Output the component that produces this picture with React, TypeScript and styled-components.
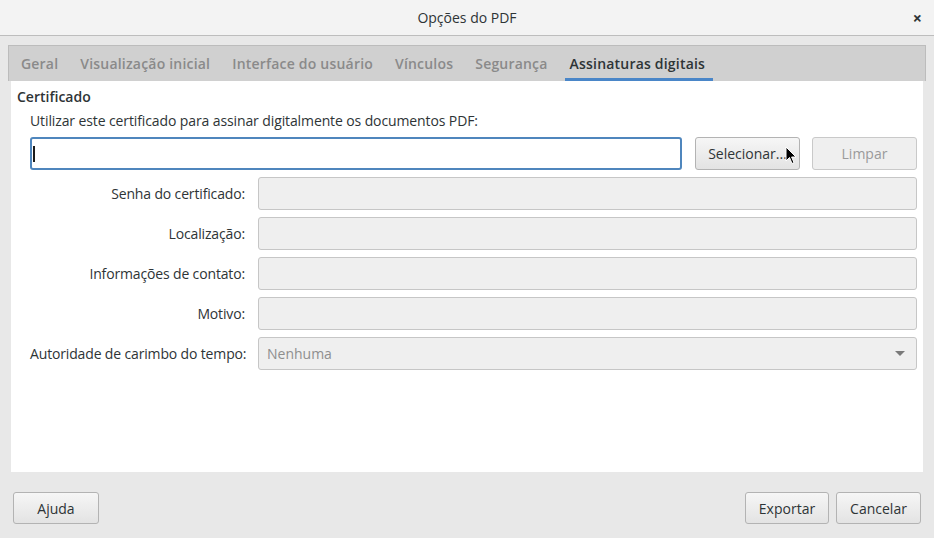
import React from "react";
import styled, { createGlobalStyle } from "styled-components";

const Global = createGlobalStyle`
  html, body { margin: 0; padding: 0; }
  body { background: #e8e8e8; font-family: "Open Sans", "Noto Sans", sans-serif; color: #2e3436; }
`;

const Window = styled.div`
  width: 934px;
  height: 538px;
  display: flex;
  flex-direction: column;
  background: #e8e8e8;
  overflow: hidden;
  position: relative;
`;

const TitleBar = styled.div`
  height: 35px;
  flex: none;
  display: grid;
  grid-template-columns: 1fr auto 1fr;
  align-items: center;
  background: #f3f3f3;
  border-bottom: 1px solid #bdbdbd;
`;

const Title = styled.div`
  grid-column: 2;
  font-size: 14px;
  color: #2e3436;
`;

const Close = styled.div`
  grid-column: 3;
  justify-self: end;
  margin-right: 12px;
  font-size: 16px;
  font-weight: 700;
  color: #2e3436;
  line-height: 1;
`;

const Body = styled.div`
  flex: 1;
  display: flex;
  flex-direction: column;
  padding: 9px 8px 0 8px;
`;

const TabStrip = styled.div`
  height: 35px;
  flex: none;
  display: flex;
  align-items: stretch;
  padding-left: 1px;
  background: #d0d0d0;
  border: 1px solid #bcbcbc;
  border-bottom: none;
`;

const Tab = styled.div<{ $active?: boolean }>`
  position: relative;
  display: flex;
  align-items: center;
  padding: 0 11px 1px 11px;
  font-size: 14px;
  font-weight: 600;
  letter-spacing: 0.2px;
  color: ${(p) => (p.$active ? "#2e3436" : "#8a8a8a")};
  ${(p) =>
    p.$active &&
    `&::after { content: ""; position: absolute; left: 6px; right: 3px; bottom: 0; height: 3px; background: #4a86c8; }`}
`;

const Panel = styled.div`
  margin: 0 3px;
  height: 391px;
  flex: none;
  background: #ffffff;
  padding: 7px 6px 0 6px;
  box-sizing: border-box;
`;

const SectionTitle = styled.div`
  font-size: 14px;
  font-weight: 600;
  line-height: 17px;
  color: #2e3436;
`;

const Indent = styled.div`
  padding-left: 13px;
  display: flex;
  flex-direction: column;
`;

const Hint = styled.div`
  font-size: 14px;
  line-height: 19px;
  margin-top: 6px;
  letter-spacing: -0.11px;
  color: #2e3436;
`;

const CertRow = styled.div`
  margin-top: 7px;
  display: flex;
  gap: 12px;
  height: 33px;
`;

const CertInput = styled.div`
  flex: 1;
  margin-right: 1px;
  border: 2px solid #4f86bd;
  border-radius: 3px;
  background: #fff;
  display: flex;
  align-items: center;
  padding-left: 1px;
`;

const Caret = styled.span`
  width: 2px;
  height: 16px;
  background: #1b1b1b;
`;

const Button = styled.div<{ $w: number; $h?: number; $disabled?: boolean }>`
  width: ${(p) => p.$w}px;
  height: ${(p) => p.$h ?? 33}px;
  box-sizing: border-box;
  display: flex;
  align-items: center;
  justify-content: center;
  border: 1px solid ${(p) => (p.$disabled ? "#c9c9c9" : "#b3b3b3")};
  border-radius: 3px;
  background: ${(p) =>
    p.$disabled ? "#efefef" : "linear-gradient(#f6f6f6, #e3e3e3)"};
  font-size: 14px;
  color: ${(p) => (p.$disabled ? "#9a9a9a" : "#2e3436")};
`;

const Form = styled.div`
  margin-top: 7px;
  display: grid;
  grid-template-columns: 215px 1fr;
  column-gap: 13px;
  row-gap: 7px;
`;

const Label = styled.div`
  font-size: 14px;
  letter-spacing: -0.15px;
  text-align: right;
  align-self: center;
  color: #2e3436;
  white-space: nowrap;
`;

const Field = styled.div`
  height: 33px;
  box-sizing: border-box;
  border: 1px solid #c6c6c6;
  border-radius: 3px;
  background: #efefef;
  display: flex;
  align-items: center;
  justify-content: space-between;
  padding: 0 11px 0 8px;
  font-size: 14px;
  color: #8e8e8e;
`;

const Arrow = styled.span`
  width: 0;
  height: 0;
  border-left: 5px solid transparent;
  border-right: 5px solid transparent;
  border-top: 5px solid #7a7a7a;
`;

const Footer = styled.div`
  flex: 1;
  display: flex;
  align-items: center;
  justify-content: space-between;
  padding: 6px 5px 0 5px;
`;

const ButtonGroup = styled.div`
  display: flex;
  gap: 7px;
`;

const Pointer = styled.svg`
  position: absolute;
  left: 785px;
  top: 146px;
`;

export default function App() {
  return (
    <>
      <Global />
      <Window>
        <TitleBar>
          <Title>Opções do PDF</Title>
          <Close>×</Close>
        </TitleBar>
        <Body>
          <TabStrip>
            <Tab>Geral</Tab>
            <Tab>Visualização inicial</Tab>
            <Tab>Interface do usuário</Tab>
            <Tab>Vínculos</Tab>
            <Tab>Segurança</Tab>
            <Tab $active>Assinaturas digitais</Tab>
          </TabStrip>
          <Panel>
            <SectionTitle>Certificado</SectionTitle>
            <Indent>
              <Hint>Utilizar este certificado para assinar digitalmente os documentos PDF:</Hint>
              <CertRow>
                <CertInput>
                  <Caret />
                </CertInput>
                <Button $w={105}>Selecionar...</Button>
                <Button $w={105} $disabled>
                  Limpar
                </Button>
              </CertRow>
              <Form>
                <Label>Senha do certificado:</Label>
                <Field />
                <Label>Localização:</Label>
                <Field />
                <Label>Informações de contato:</Label>
                <Field />
                <Label>Motivo:</Label>
                <Field />
                <Label>Autoridade de carimbo do tempo:</Label>
                <Field>
                  Nenhuma
                  <Arrow />
                </Field>
              </Form>
            </Indent>
          </Panel>
          <Footer>
            <Button $w={86} $h={32}>Ajuda</Button>
            <ButtonGroup>
              <Button $w={84} $h={32}>Exportar</Button>
              <Button $w={85} $h={32}>Cancelar</Button>
            </ButtonGroup>
          </Footer>
        </Body>
        <Pointer width="12" height="19" viewBox="0 0 12 19">
          <path d="M1 1 L1 15 L4.5 11.5 L7 17.5 L9 16.6 L6.6 11 L11 11 Z" fill="#000" stroke="#fff" strokeWidth="1" />
        </Pointer>
      </Window>
    </>
  );
}
